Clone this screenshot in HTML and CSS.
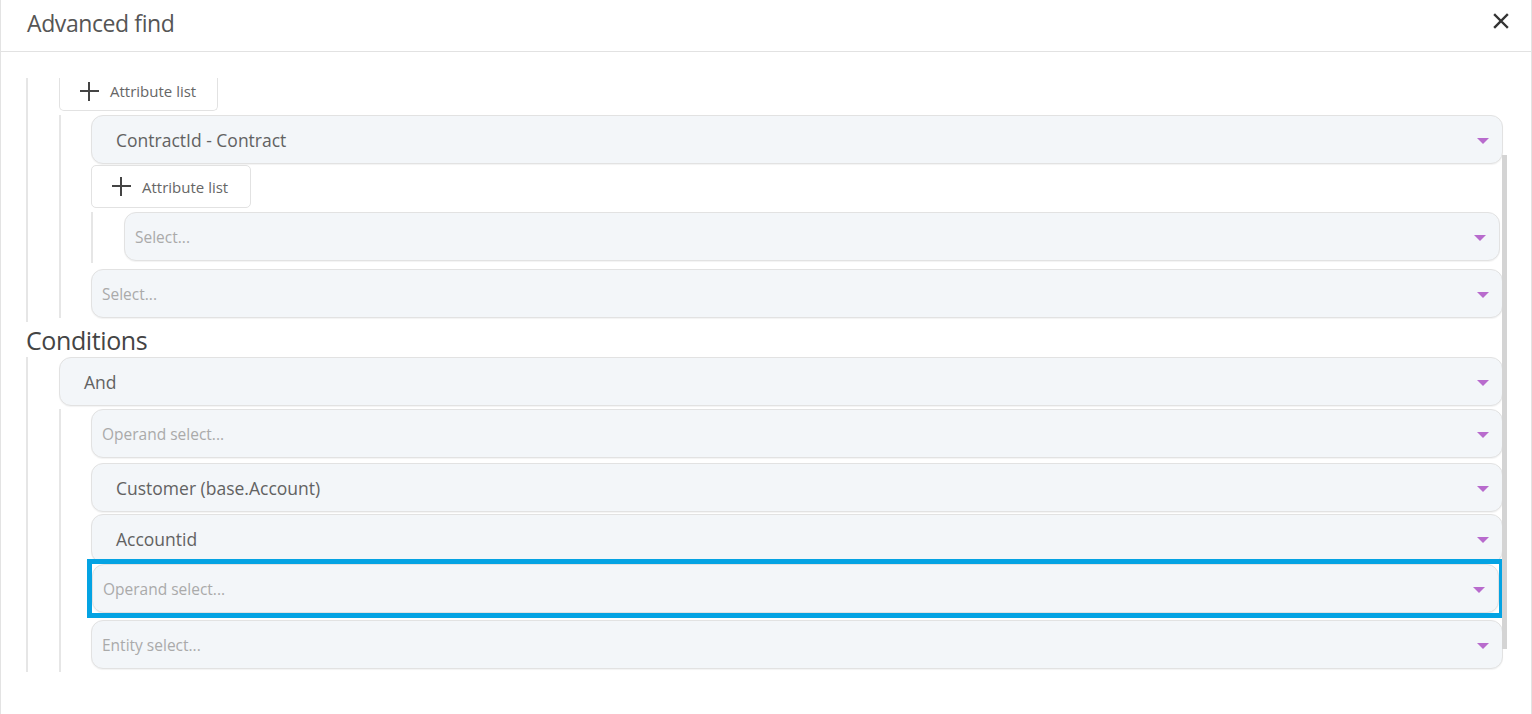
FILE: index.html
```html
<!DOCTYPE html>
<html lang="en">
  <head>
    <meta charset="UTF-8" />
    <title>Advanced find</title>
    <link rel="stylesheet" href="styles.css">
  </head>
  <body>
    <div class="modal">
      <div class="modal-header">
        <h2 class="modal-title">Advanced find</h2>
        <button class="close-btn" aria-label="Close">
          <svg width="16" height="16" viewBox="0 0 16 16"><path d="M2 2L14 14M14 2L2 14" stroke="#333" stroke-width="2.4" stroke-linecap="square"/></svg>
        </button>
      </div>

      <div class="modal-body">
        <!-- attributes tree (scrolled, top is cut off) -->
        <div class="branch branch-top">
          <button class="add-btn add-btn-cut">
            <span class="plus"></span>Attribute list
          </button>
          <div class="branch branch-mid">
            <div class="select gap-4"><span class="value">ContractId - Contract</span><span class="caret"></span></div>
            <button class="add-btn add-btn-nested">
              <span class="plus"></span>Attribute list
            </button>
            <div class="branch branch-inner">
              <div class="select select-inner gap-4"><span class="placeholder">Select...</span><span class="caret"></span></div>
            </div>
            <div class="select gap-6"><span class="placeholder">Select...</span><span class="caret"></span></div>
          </div>
        </div>

        <h3 class="section-title">Conditions</h3>

        <div class="branch branch-cond">
          <div class="select"><span class="value">And</span><span class="caret"></span></div>
          <div class="branch branch-ops">
            <div class="select gap-3"><span class="placeholder">Operand select...</span><span class="caret"></span></div>
            <div class="select gap-5"><span class="value">Customer (base.Account)</span><span class="caret"></span></div>
            <div class="select gap-2"><span class="value">Accountid</span><span class="caret"></span></div>
            <div class="focus-ring">
              <div class="select"><span class="placeholder">Operand select...</span><span class="caret"></span></div>
            </div>
            <div class="select gap-7"><span class="placeholder">Entity select...</span><span class="caret"></span></div>
          </div>
        </div>

        <div class="scroll-thumb"></div>
      </div>
    </div>
  </body>
</html>
```

FILE: styles.css
```css
body {
    margin: 0;
    font-family: 'Open Sans', 'Noto Sans', sans-serif;
    background-color: #fff;
    color: #555;
}

.modal {
    height: 714px;
    box-sizing: border-box;
    border-left: 1px solid #e3e3e3;
    border-right: 1px solid #e3e3e3;
    overflow: hidden;
}

.modal-header {
    height: 52px;
    box-sizing: border-box;
    border-bottom: 1px solid #e2e2e2;
    display: flex;
    align-items: center;
    justify-content: space-between;
    padding: 0 22px 6px 26px;
}

.modal-title {
    margin: 0;
    font-size: 23px;
    font-weight: normal;
    color: #555;
    letter-spacing: -0.4px;
}

.close-btn {
    background: none;
    border: none;
    padding: 0;
    margin-top: -4px;
    cursor: pointer;
    display: flex;
}

.modal-body {
    position: relative;
    padding: 26px 28px 0 25px;
}

.branch {
    border-left: 2px solid #e6e6e6;
}

.branch-top {
    padding: 0 0 4px 31px;
}

.branch-mid {
    padding: 0 0 0 30px;
}

.branch-inner {
    padding: 0 0 2px 31px;
}

.branch-cond {
    padding: 0 0 0 31px;
}

.branch-ops {
    padding: 0 0 3px 30px;
}

.add-btn {
    display: flex;
    align-items: center;
    gap: 11px;
    background: #fff;
    border: 1px solid #e2e2e2;
    border-radius: 5px;
    font-family: inherit;
    font-size: 15px;
    color: #666;
    padding: 0 20px;
    cursor: pointer;
}

.add-btn-cut {
    height: 33px;
    width: 159px;
    border-top: none;
    border-top-left-radius: 0;
    border-top-right-radius: 0;
    padding-bottom: 6px;
}

.add-btn-nested {
    height: 43px;
    width: 160px;
    margin-top: 1px;
}

.plus {
    position: relative;
    width: 19px;
    height: 19px;
    flex: none;
}

.plus::before,
.plus::after {
    content: '';
    position: absolute;
    background-color: #444;
}

.plus::before {
    left: 0;
    top: 8px;
    width: 19px;
    height: 2px;
}

.plus::after {
    left: 8px;
    top: 0;
    width: 2px;
    height: 19px;
}

.select {
    height: 49px;
    box-sizing: border-box;
    background-color: #f3f6f9;
    border: 1px solid #e2e2e2;
    border-radius: 12px;
    box-shadow: 0 1px 1px rgba(0, 0, 0, 0.05);
    display: flex;
    align-items: center;
    justify-content: space-between;
    padding: 0 13px 0 10px;
    font-size: 17.5px;
}

.select .value {
    color: #626262;
    padding-left: 14px;
}

.select .placeholder {
    color: #aaa;
    font-size: 15.5px;
}

.caret {
    width: 0;
    height: 0;
    border-left: 6px solid transparent;
    border-right: 6px solid transparent;
    border-top: 6px solid #b86bcd;
    margin-top: 2px;
}

.select-inner {
    margin-right: 3px;
}

.gap-2 { margin-top: 2px; }
.gap-3 { margin-top: 3px; }
.gap-4 { margin-top: 4px; }
.gap-5 { margin-top: 5px; }
.gap-6 { margin-top: 6px; }
.gap-7 { margin-top: 7px; }

.focus-ring {
    margin: 1px 4px 0 1px;
    outline: 5px solid #04a3e3;
}

.section-title {
    margin: 0;
    height: 35px;
    line-height: 37px;
    font-size: 25px;
    font-weight: normal;
    color: #444;
    letter-spacing: -0.4px;
}

.scroll-thumb {
    position: absolute;
    right: 24px;
    top: 103px;
    width: 5px;
    height: 494px;
    background-color: #d4d4d4;
}
```
